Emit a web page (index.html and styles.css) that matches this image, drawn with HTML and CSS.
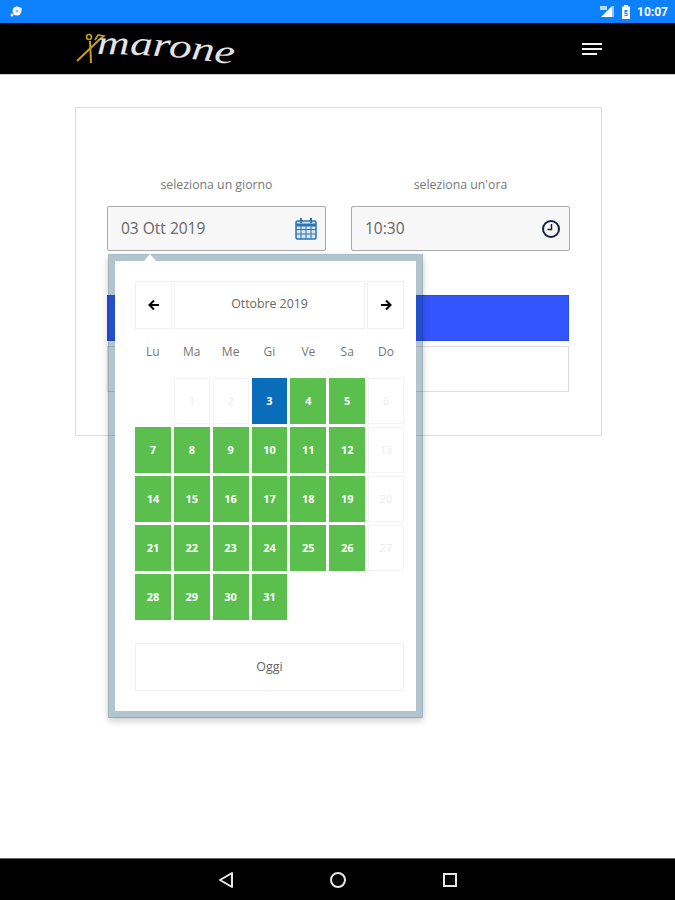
FILE: index.html
```html
<!DOCTYPE html>
<html lang="it">
<head>
<meta charset="utf-8">
<title>Marone</title>
<link rel="stylesheet" href="styles.css">
</head>
<body>
<div class="page">
  <div class="status">
    <svg class="st-blob" width="16" height="14" viewBox="0 0 16 14"><circle cx="9" cy="6" r="4.5" fill="#fff"/><circle cx="9" cy="6" r="1.6" fill="#8fc4ff"/><circle cx="4" cy="10" r="1.5" fill="#fff"/><circle cx="12.5" cy="4" r="1.5" fill="#dcecff"/></svg>
    <div class="st-right">
      <svg width="16" height="13" viewBox="0 0 16 13"><path d="M2 12 13 1v11z" fill="#fff"/><path d="M13 1h2v11h-2z" fill="#8fc4ff"/><path d="M1 1h7v4H1z" fill="#b9d9ff"/></svg>
      <svg width="10" height="14" viewBox="0 0 10 14"><path d="M3 0h4v1.5h2V14H1V1.500h2z" fill="#fff"/><path d="M3.500 5h3v2h-2v1h2v3h-3V10h2V9h-2z" fill="#1b86fb"/></svg>
      <span class="st-time">10:07</span>
    </div>
  </div>
  <header class="topbar">
    <div class="logo">
      <svg width="180" height="50" viewBox="0 -3 180 50">
        <g stroke="#c39f18" fill="none" stroke-width="2">
          <path d="M2 34 25 12"/>
          <path d="M15 14l1 22"/>
          <circle cx="14" cy="10" r="2.500" stroke-width="1.600"/>
          <path d="M25 12l4-3-6-1-3 5" stroke-width="1.600"/>
        </g>
        <defs><path id="logo-curve" d="M22 27C70 27 120 30 178 41"/></defs>
        <text class="logo-text" textLength="137" lengthAdjust="spacingAndGlyphs"><textPath href="#logo-curve">marone</textPath></text>
      </svg>
    </div>
    <button class="burger" type="button" aria-label="Menu"><span class="bar"></span><span class="bar"></span><span class="bar bar-short"></span></button>
  </header>
  <main class="content">
    <section class="card">
      <div class="fields">
        <div class="field">
          <label class="field-label">seleziona un giorno</label>
          <div class="input">
            <span>03 Ott 2019</span>
            <svg width="22" height="23" viewBox="0 0 22 23" fill="none" stroke="#2a74b8"><rect x="1" y="4" width="20" height="18" rx="1.500" fill="#d5e5f4" stroke-width="1.500"/><path d="M1 8h20" stroke-width="3"/><path d="M1 12.500h20M1 17h20M6 9v13M11 9v13M16 9v13" stroke-width="1"/><path d="M6 1v5M16 1v5" stroke-width="2"/></svg>
          </div>
          <div class="picker">
            <span class="picker-arrow"></span>
            <div class="picker-head">
              <button class="pbtn nav" type="button"><svg width="12" height="12" viewBox="0 0 12 12" fill="none" stroke="#000" stroke-width="2"><path d="M11 6H2M6 1.500 1.500 6 6 10.500"/></svg></button>
              <button class="pbtn month" type="button">Ottobre 2019</button>
              <button class="pbtn nav" type="button"><svg width="12" height="12" viewBox="0 0 12 12" fill="none" stroke="#000" stroke-width="2"><path d="M1 6h9M6 1.500 10.500 6 6 10.500"/></svg></button>
            </div>
            <div class="dow"><span>Lu</span><span>Ma</span><span>Me</span><span>Gi</span><span>Ve</span><span>Sa</span><span>Do</span></div>
            <div class="days">
              <span class="day blank"></span>
              <span class="day off">1</span><span class="day off">2</span><span class="day now">3</span><span class="day on">4</span><span class="day on">5</span><span class="day off">6</span>
              <span class="day on">7</span><span class="day on">8</span><span class="day on">9</span><span class="day on">10</span><span class="day on">11</span><span class="day on">12</span><span class="day off">13</span>
              <span class="day on">14</span><span class="day on">15</span><span class="day on">16</span><span class="day on">17</span><span class="day on">18</span><span class="day on">19</span><span class="day off">20</span>
              <span class="day on">21</span><span class="day on">22</span><span class="day on">23</span><span class="day on">24</span><span class="day on">25</span><span class="day on">26</span><span class="day off">27</span>
              <span class="day on">28</span><span class="day on">29</span><span class="day on">30</span><span class="day on">31</span>
            </div>
            <button class="pbtn today" type="button">Oggi</button>
          </div>
        </div>
        <div class="field">
          <label class="field-label">seleziona un'ora</label>
          <div class="input">
            <span>10:30</span>
            <svg width="20" height="20" viewBox="0 0 20 20" fill="none" stroke="#14233f"><circle cx="10" cy="10" r="8" stroke-width="2"/><path d="M10.500 5v5.500H6.500" stroke-width="1.500"/></svg>
          </div>
        </div>
      </div>
      <button class="btn-primary" type="button"></button>
      <button class="btn-outline" type="button"></button>
    </section>
  </main>
  <nav class="navbar">
    <svg width="18" height="18" viewBox="0 0 18 18" fill="none" stroke="#e8e8e8" stroke-width="2"><path d="M15 2v14L3 9z" stroke-linejoin="round"/></svg>
    <svg width="18" height="18" viewBox="0 0 18 18" fill="none" stroke="#e8e8e8" stroke-width="2"><circle cx="9" cy="9" r="7"/></svg>
    <svg width="18" height="18" viewBox="0 0 18 18" fill="none" stroke="#e8e8e8" stroke-width="2"><rect x="3" y="3" width="12" height="12"/></svg>
  </nav>
</div>
</body>
</html>
```

FILE: styles.css
```css
* { box-sizing: border-box; }
html, body { margin: 0; padding: 0; }
body { font-family: "Open Sans", "Liberation Sans", sans-serif; color: #666; background: #fff; }
button { font-family: inherit; padding: 0; background: #fff; }

.page { width: 675px; height: 900px; display: flex; flex-direction: column; overflow: hidden; }

.status { height: 23px; flex: none; background: #0d80fd; display: flex; align-items: center; justify-content: space-between; padding: 0 7px 0 8px; }
.st-right { display: flex; align-items: center; gap: 6px; }
.st-time { color: #fff; font: 700 12px "Roboto", sans-serif; }

.topbar { height: 52px; flex: none; background: #000; border-bottom: 1px solid #ccc; display: flex; align-items: center; justify-content: space-between; padding: 0 73px 0 75px; }
.logo { display: flex; }
.logo-text { font: italic 400 34px "Liberation Serif", serif; fill: #e4e4e4; }
.burger { width: 20px; background: none; border: 0; display: flex; flex-direction: column; gap: 3px; align-items: flex-start; }
.bar { display: block; width: 20px; height: 2px; background: #f2f2f2; }
.bar-short { width: 15px; }

.content { flex: 1; padding: 32px 74px 0 75px; }

.card { width: 527px; height: 329px; border: 1px solid #dcdcdc; padding: 68px 31px 0; }
.fields { display: flex; gap: 25px; margin-bottom: 44px; }
.field { width: 219px; position: relative; }
.field-label { display: block; height: 30px; text-align: center; font-size: 12.300px; line-height: 18px; color: #777; }
.input { height: 45px; background: #f7f7f7; border: 1px solid #aaa; border-radius: 2px; display: flex; align-items: center; justify-content: space-between; padding: 0 8px 2px 13px; font-size: 15.500px; color: #666; }
.input svg { margin-top: 2px; }

.btn-primary { display: block; width: 462px; height: 46px; background: #3355ff; border: 1px solid #2a4cf0; margin-bottom: 5px; }
.btn-outline { display: block; width: 462px; height: 46px; background: #fff; border: 1px solid #ddd; }

.picker { position: absolute; left: 1px; top: 78px; width: 315px; height: 464px; background: #fff; background-clip: padding-box; border: 7px solid rgba(0, 62, 92, .3); padding: 20px 12px 0 20px; box-shadow: 0 3px 7px rgba(0,0,0,.2); z-index: 5; }
.picker-arrow { position: absolute; left: 29px; top: -7px; width: 0; height: 0; border-left: 6px solid transparent; border-right: 6px solid transparent; border-bottom: 7px solid #fff; }
.picker-head { display: grid; grid-template-columns: 37px 1fr 37px; gap: 2px; height: 48px; width: 269px; }
.pbtn { border: 1px solid #f0f0f0; color: #666; font-size: 12.300px; display: flex; align-items: center; justify-content: center; padding-bottom: 3px; }
.pbtn.nav { padding-bottom: 1px; }
.dow { display: grid; grid-template-columns: repeat(7, 1fr); gap: 3px; width: 269px; height: 49px; align-items: center; text-align: center; font-size: 12px; color: #777; padding-bottom: 4px; }
.days { display: grid; grid-template-columns: repeat(7, 1fr); grid-auto-rows: 46px; gap: 3px; width: 269px; }
.day { display: flex; align-items: center; justify-content: center; font-size: 11px; font-weight: 700; padding-bottom: 2px; }
.on { background: #5abf4c; color: #fff; }
.now { background: #0a6dba; color: #fff; }
.off { border: 1px solid #f4f4f4; color: #ececec; font-weight: 400; }
.today { width: 269px; height: 48px; margin-top: 23px; font-size: 12.500px; padding-bottom: 2px; }

.navbar { height: 42px; flex: none; background: #000; border-top: 1px solid #666; display: flex; align-items: center; justify-content: center; gap: 94px; }
```
